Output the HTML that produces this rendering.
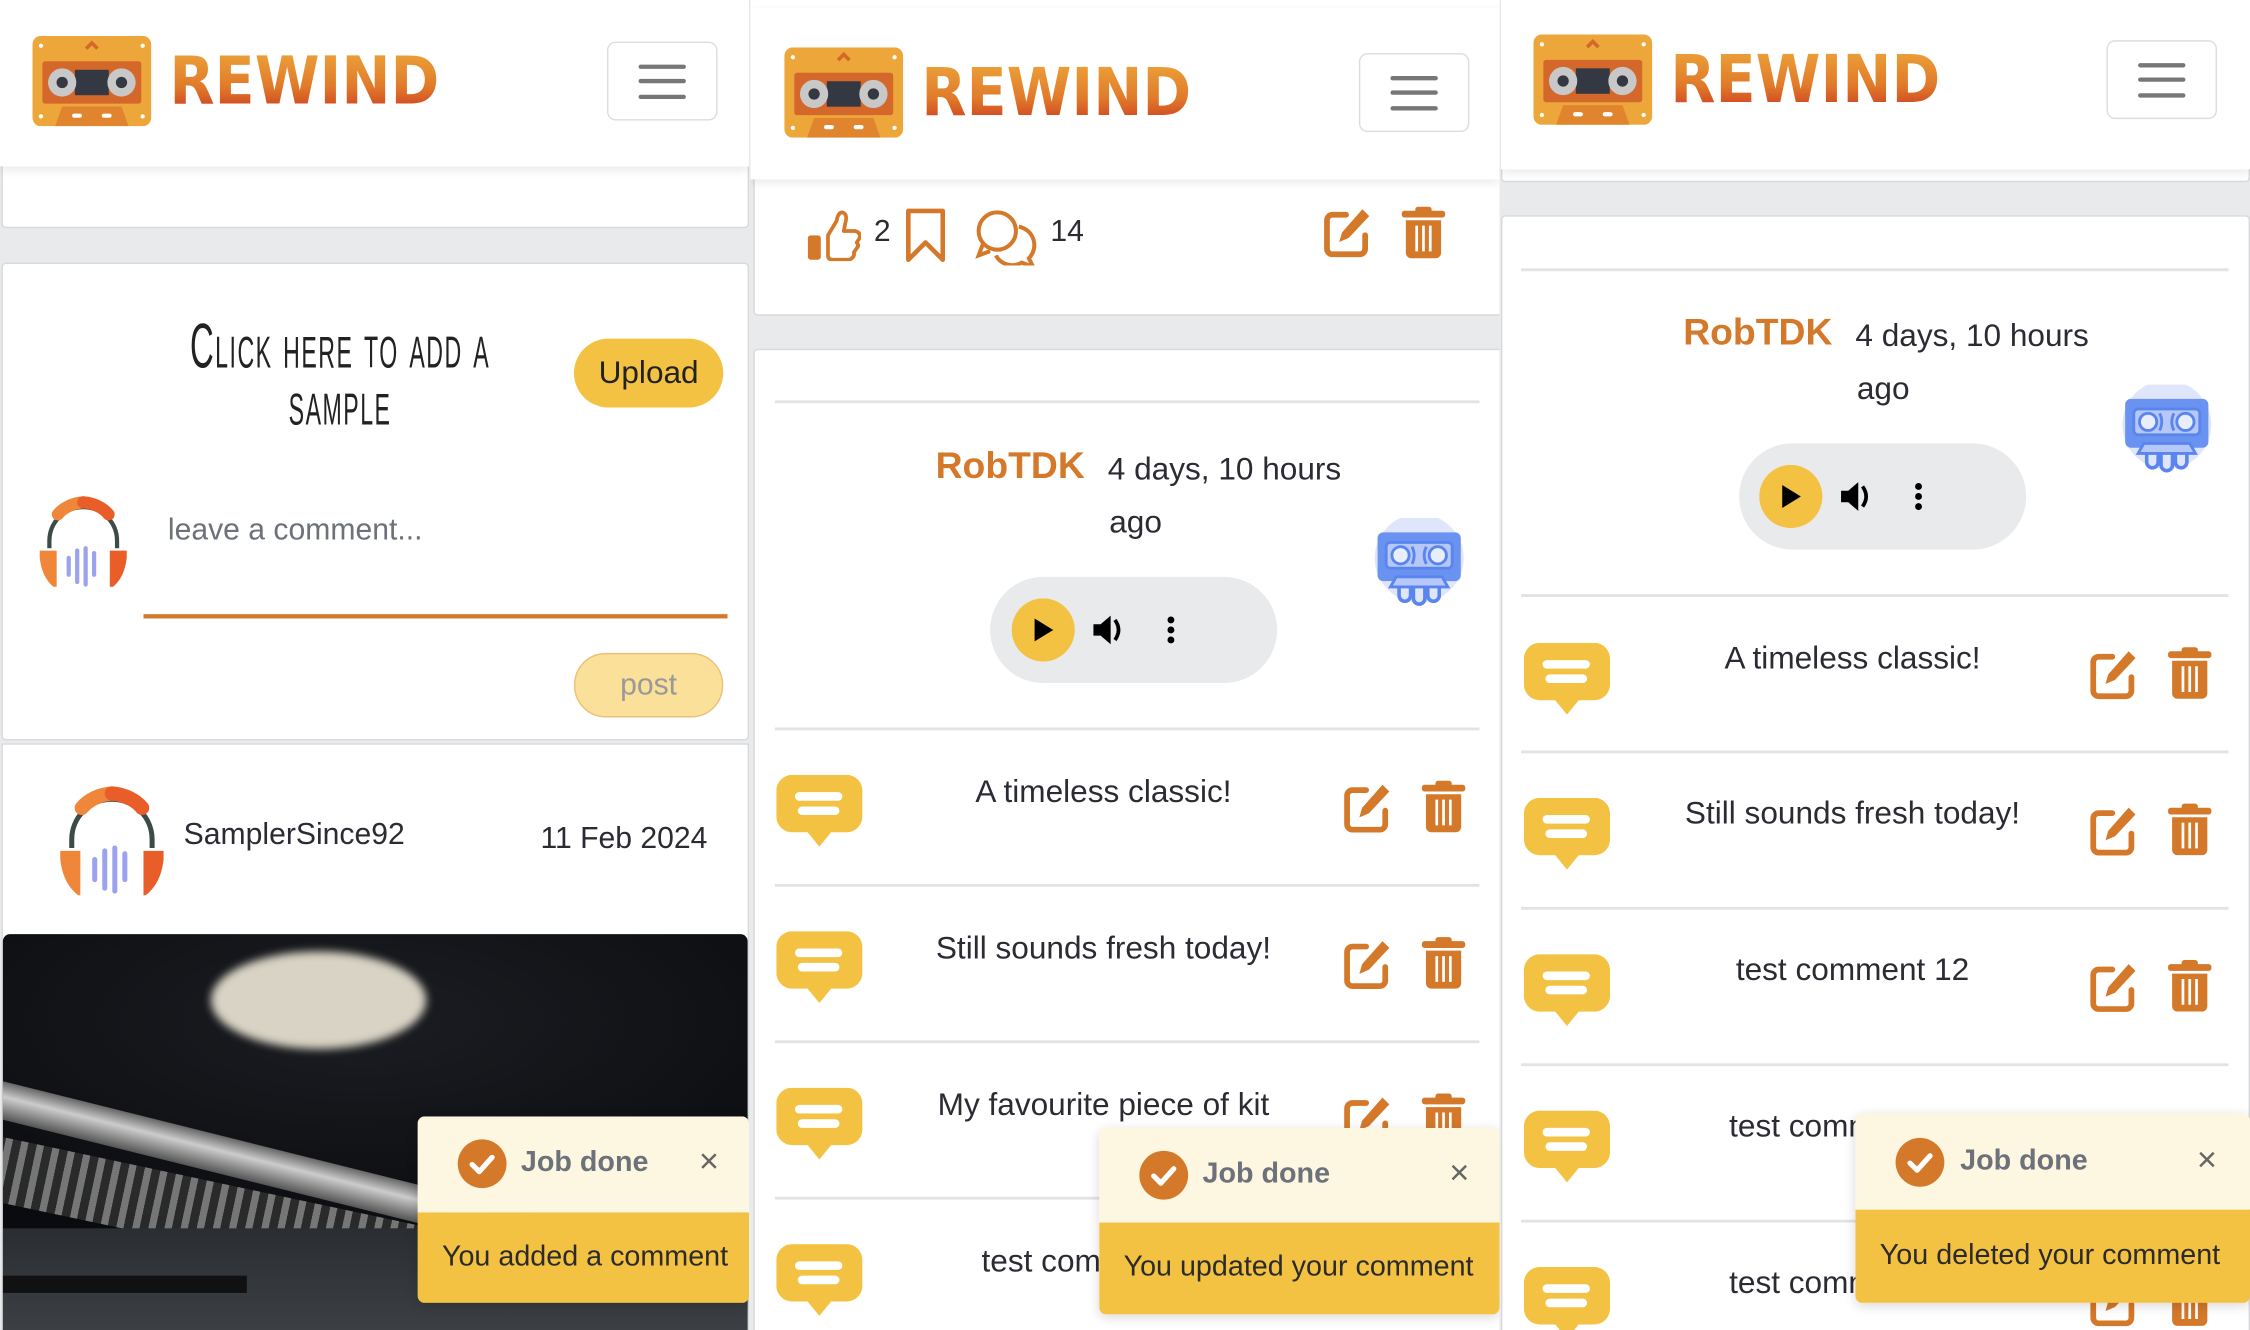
<!DOCTYPE html>
<html><head><meta charset="utf-8">
<style>
html,body{margin:0;padding:0;background:#fff;overflow:hidden}
body{width:2250px;height:1330px;position:relative}
#w{position:absolute;left:0;top:0;width:1568px;height:927px;transform:scale(1.43495);transform-origin:0 0;font-family:"Liberation Sans",sans-serif;color:#2b2b33;background:#e9eaec}
.a{position:absolute}
.pnl{position:absolute;top:0;height:927px;overflow:hidden;background:#e9eaec}
.hdr{position:absolute;left:0;right:0;background:#fff;box-shadow:0 3px 6px rgba(0,0,0,.08);z-index:2}
.rw{position:absolute;font-family:"DejaVu Sans","Liberation Sans",sans-serif;font-weight:bold;font-size:46px;letter-spacing:0;line-height:46px;background:linear-gradient(#eda63a,#e07a2a 60%,#cc3a20);-webkit-background-clip:text;background-clip:text;color:transparent;transform:scaleX(0.89);transform-origin:0 0}
.hb{position:absolute;width:75px;height:53px;border:1px solid #ddd;border-radius:6px;background:#fff}
.hb i{position:absolute;left:21px;width:33px;height:3px;background:#777;border-radius:2px}
.card{position:absolute;background:#fff;border:1px solid #d8d9dc;border-radius:3px}
.ln{position:absolute;height:2px;background:#e3e3e3}
.t{position:absolute;white-space:nowrap}
.toast{position:absolute;border-radius:5px;overflow:hidden;box-shadow:0 2px 8px rgba(0,0,0,.15);z-index:5}
.toast .h{position:absolute;left:0;right:0;top:0;background:#fdf6e0}
.toast .b{position:absolute;left:0;right:0;bottom:0;background:#f4c242}
.pill{position:absolute;width:200px;height:74px;border-radius:37px;background:#e9eaec}
.cl{position:absolute;left:0;width:474px;text-align:center;font-variant:small-caps;font-size:44px;line-height:40px;letter-spacing:2px;color:#222;transform:scaleX(0.52);transform-origin:237px 0;white-space:nowrap}
</style></head><body>
<svg width="0" height="0" style="position:absolute">
<defs>
<linearGradient id="wg" x1="0" y1="0" x2="0" y2="1"><stop offset="0" stop-color="#e8452a"/><stop offset="1" stop-color="#f3b440"/></linearGradient>
<symbol id="wave" viewBox="0 0 48 56"><g stroke="url(#wg)" stroke-width="4.5" stroke-linecap="round"><line x1="3" y1="22" x2="3" y2="40"/><line x1="13" y1="4" x2="13" y2="52"/><line x1="23" y1="14" x2="23" y2="46"/><line x1="33" y1="20" x2="33" y2="40"/><line x1="43" y1="10" x2="43" y2="46"/></g></symbol>
<symbol id="edit" viewBox="0 0 40 40"><path d="M19 7H9a4 4 0 0 0-4 4v21a4 4 0 0 0 4 4h20a4 4 0 0 0 4-4V22" fill="none" stroke="#d4782a" stroke-width="4.2" stroke-linecap="round"/><path d="M31 3l5 5-15 16-7 3 2-7z" fill="#d4782a"/></symbol>
<symbol id="trash" viewBox="0 0 36 40"><rect x="2" y="4" width="32" height="5" rx="2" fill="#d4782a"/><rect x="12" y="1" width="12" height="5" rx="2" fill="#d4782a"/><path d="M5 11h26v24a4 4 0 0 1-4 4H9a4 4 0 0 1-4-4z" fill="#d4782a"/><g stroke="#fff" stroke-width="2"><line x1="13" y1="15" x2="13" y2="34"/><line x1="18" y1="15" x2="18" y2="34"/><line x1="23" y1="15" x2="23" y2="34"/></g></symbol>
<symbol id="bub" viewBox="0 0 60 56"><rect x="0" y="0" width="60" height="40" rx="11" fill="#f4c242"/><path d="M21 39h18l-9 11z" fill="#f4c242"/><rect x="13" y="12" width="33" height="6" rx="3" fill="#fff"/><rect x="15" y="22" width="29" height="6" rx="3" fill="#fff"/></symbol>
<symbol id="cass" viewBox="0 0 84 64"><rect x="0" y="0" width="84" height="64" rx="6" fill="#eda63a"/><rect x="7" y="18" width="70" height="30" rx="2" fill="#d4672a"/><rect x="30" y="24" width="24" height="18" fill="#333842"/><circle cx="21" cy="33" r="10" fill="#c8c8c8"/><circle cx="63" cy="33" r="10" fill="#c8c8c8"/><circle cx="21" cy="33" r="4" fill="#333842"/><circle cx="63" cy="33" r="4" fill="#333842"/><path d="M38 9l4-4 4 4" stroke="#d4672a" stroke-width="2.5" fill="none"/><path d="M16 64l5-14h42l5 14z" fill="#e0852e"/><rect x="28" y="55" width="7" height="3" rx="1.5" fill="#fff"/><rect x="49" y="55" width="7" height="3" rx="1.5" fill="#fff"/><g fill="#fff"><circle cx="6" cy="7" r="1.5"/><circle cx="78" cy="7" r="1.5"/><circle cx="6" cy="57" r="1.5"/><circle cx="78" cy="57" r="1.5"/></g></symbol>
<symbol id="head" viewBox="0 0 76 76"><path d="M10 44V38a28 28 0 0 1 56 0v6" fill="none" stroke="#3c4a48" stroke-width="3.5"/><path d="M17 16a28 22 0 0 1 21-10" fill="none" stroke="#f0863a" stroke-width="10" stroke-linecap="round"/><path d="M38 6a28 22 0 0 1 21 10" fill="none" stroke="#e85d28" stroke-width="10" stroke-linecap="round"/><path d="M2 46h14v32q-12-8-14-26z" fill="#f0863a"/><path d="M74 46H60v32q12-8 14-26z" fill="#e85d28"/><g stroke="#9ca3ee" stroke-width="3.5" stroke-linecap="round"><line x1="26" y1="52" x2="26" y2="66"/><line x1="33" y1="46" x2="33" y2="72"/><line x1="40" y1="44" x2="40" y2="74"/><line x1="47" y1="48" x2="47" y2="66"/></g></symbol>
<symbol id="blue" viewBox="0 0 64 64"><circle cx="32" cy="28" r="31" fill="#dfe6fb"/><rect x="3" y="10" width="58" height="34" rx="4" fill="#6a92f0"/><rect x="9" y="17" width="46" height="18" rx="3" fill="#b5c8f7" stroke="#5b85ee" stroke-width="2"/><circle cx="19" cy="26" r="6" fill="#e8eefc" stroke="#5b85ee" stroke-width="2"/><circle cx="45" cy="26" r="6" fill="#e8eefc" stroke="#5b85ee" stroke-width="2"/><path d="M27 20q3 6 0 12M37 20q-3 6 0 12" stroke="#5b85ee" stroke-width="2" fill="none"/><path d="M12 48l4-7h32l4 7z" fill="#b5c8f7" stroke="#5b85ee" stroke-width="2"/><path d="M18 48v6a4 4 0 0 0 8 0v-6M28 48v8a4 4 0 0 0 8 0v-8M38 48v6a4 4 0 0 0 8 0v-6" stroke="#5b85ee" stroke-width="2.5" fill="none"/></symbol>
<symbol id="chk" viewBox="0 0 36 36"><circle cx="18" cy="18" r="17" fill="#d4782a"/><path d="M11 18.5l5 5 9-10" stroke="#fff" stroke-width="3.6" fill="none" stroke-linecap="round" stroke-linejoin="round"/></symbol>
<symbol id="play" viewBox="0 0 160 44"><circle cx="22" cy="22" r="22" fill="#f4c242"/><path d="M16 14v16l13-8z" fill="#000"/><path d="M57 18h5l7-6v20l-7-6h-5z" fill="#000"/><path d="M72 15q5 7 0 14" stroke="#000" stroke-width="2.6" fill="none"/><circle cx="111" cy="15" r="2.4" fill="#000"/><circle cx="111" cy="22" r="2.4" fill="#000"/><circle cx="111" cy="29" r="2.4" fill="#000"/></symbol>
</defs></svg>

<div id="w">
<!-- PANEL 1 -->
<div class="pnl" style="left:0;width:522px">
 <div class="hdr" style="top:0;height:116px">
  <svg class="a" style="left:22px;top:25px" width="84" height="63"><use href="#cass"/></svg>
  <div class="rw" style="left:118px;top:33px">REWIND</div>
  <div class="hb" style="left:423px;top:29px"><i style="top:15px"></i><i style="top:25px"></i><i style="top:36px"></i></div>
 </div>
 <div class="card" style="left:1px;top:100px;width:519px;height:57px"></div>
 <div class="card" style="left:1px;top:183px;width:519px;height:331px"></div>
 <svg class="a" style="left:34px;top:232px" width="48" height="56"><use href="#wave"/></svg>
 <div class="cl" style="top:222px">Click here to add a</div>
 <div class="cl" style="top:262px">sample</div>
 <div class="a" style="left:400px;top:236px;width:104px;height:48px;border-radius:24px;background:#f4c242;font-size:22px;line-height:48px;text-align:center;color:#222">Upload</div>
 <svg class="a" style="left:26px;top:345px" width="64" height="64"><use href="#head"/></svg>
 <div class="t" style="left:117px;top:358px;font-size:21px;color:#6c717a">leave a comment...</div>
 <div class="a" style="left:100px;top:428px;width:407px;height:3px;background:#d4782a"></div>
 <div class="a" style="left:400px;top:455px;width:102px;height:43px;border-radius:22px;background:#fbe09a;border:1px solid #ecc07a;font-size:21px;line-height:43px;text-align:center;color:#999">post</div>
 <div class="card" style="left:1px;top:518px;width:519px;height:420px;border-radius:0"></div>
 <svg class="a" style="left:40px;top:546px" width="76" height="78"><use href="#head"/></svg>
 <div class="t" style="left:128px;top:570px;font-size:21px">SamplerSince92</div>
 <div class="t" style="right:29px;top:573px;font-size:21px">11 Feb 2024</div>
 <div class="a" style="left:2px;top:651px;width:519px;height:276px;border-radius:5px 5px 0 0;overflow:hidden;background:radial-gradient(ellipse 400px 160px at 250px 60px,#1b1d22 0,#0a0b0e 100%)">
  <div class="a" style="left:145px;top:12px;width:150px;height:68px;border-radius:50%;background:#d8d3c4;filter:blur(3px)"></div>
  <div class="a" style="left:-30px;top:95px;width:600px;height:26px;transform:rotate(14deg);transform-origin:0 0;background:linear-gradient(#666,#ccc 40%,#555);border-radius:13px"></div>
  <div class="a" style="left:-30px;top:135px;width:330px;height:45px;transform:rotate(12deg);transform-origin:0 0;background:repeating-linear-gradient(90deg,#999 0 5px,#333 5px 11px);opacity:.75"></div>
  <div class="a" style="left:0;top:205px;width:519px;height:75px;background:linear-gradient(#2a2d31,#3d4145)"></div>
  <div class="a" style="left:0;top:238px;width:170px;height:12px;background:#111"></div>
 </div>
 <div class="toast" style="left:291px;top:778px;width:231px;height:130px">
  <div class="h" style="height:67px">
   <svg class="a" style="left:27px;top:15px" width="36" height="36"><use href="#chk"/></svg>
   <div class="t" style="left:72px;top:21px;font-size:20px;font-weight:bold;color:#6c717a">Job done</div>
   <div class="t" style="left:196px;top:18px;font-size:24px;color:#666">×</div>
  </div>
  <div class="b" style="height:63px"><div class="t" style="left:17px;top:20px;font-size:20px;color:#2b2b2b">You added a comment</div></div>
 </div>
</div>

<!-- PANEL 2 -->
<div class="pnl" style="left:523px;width:522px;background:#e9eaec">
 <div class="a" style="left:0;top:0;width:522px;height:5px;background:#fff"></div>
 <div class="hdr" style="top:5px;height:120px">
  <svg class="a" style="left:23px;top:28px" width="84" height="63"><use href="#cass"/></svg>
  <div class="rw" style="left:119px;top:36px">REWIND</div>
  <div class="hb" style="left:424px;top:32px"><i style="top:15px"></i><i style="top:25px"></i><i style="top:36px"></i></div>
 </div>
 <div class="card" style="left:2px;top:110px;width:520px;height:108px"></div>
 <svg class="a" style="left:39px;top:146px" width="38" height="36" viewBox="0 0 38 36"><rect x="1" y="18" width="9" height="17" rx="2" fill="#d4782a"/><path d="M15 18l6-10q1-6 4-6 4 1 2 8l-1 5h8q4 1 3 5l-2 3q2 2 0 4l-2 3q1 3-3 5H18q-3 0-3-3z" fill="none" stroke="#d4782a" stroke-width="2.6" stroke-linejoin="round"/></svg>
 <div class="t" style="left:86px;top:150px;font-size:21px">2</div>
 <svg class="a" style="left:108px;top:145px" width="28" height="38" viewBox="0 0 28 38"><path d="M2 2h24v34l-12-12-12 12z" fill="none" stroke="#d4782a" stroke-width="3.2" stroke-linejoin="round"/></svg>
 <svg class="a" style="left:153px;top:145px" width="48" height="40" viewBox="0 0 48 40"><circle cx="19" cy="16" r="13" fill="none" stroke="#d4782a" stroke-width="2.8"/><path d="M9 25l-3 8 8-3" fill="none" stroke="#d4782a" stroke-width="2.8"/><path d="M34 13a13 13 0 0 1 7 22l3 6-8-3a13 13 0 0 1-18-5" fill="none" stroke="#d4782a" stroke-width="2.8"/></svg>
 <div class="t" style="left:209px;top:150px;font-size:21px">14</div>
 <svg class="a" style="left:397px;top:143px" width="38" height="38"><use href="#edit"/></svg>
 <svg class="a" style="left:452px;top:143px" width="34" height="38"><use href="#trash"/></svg>
 <div class="card" style="left:2px;top:243px;width:520px;height:700px"></div>
 <div class="ln" style="left:17px;top:279px;width:491px"></div>
 <div class="t" style="left:129px;top:309px;font-size:26px;font-weight:bold;color:#d4782a">RobTDK</div>
 <div class="t" style="left:249px;top:314px;font-size:22px">4 days, 10 hours</div>
 <div class="t" style="left:250px;top:351px;font-size:22px">ago</div>
 <svg class="a" style="left:34px;top:368px" width="50" height="54"><use href="#wave"/></svg>
 <svg class="a" style="left:434px;top:361px" width="64" height="64"><use href="#blue"/></svg>
 <div class="pill" style="left:167px;top:402px"></div>
 <svg class="a" style="left:182px;top:417px" width="160" height="44"><use href="#play"/></svg>
 <div class="ln" style="left:17px;top:507px;width:491px"></div>
 <div class="ln" style="left:17px;top:616px;width:491px"></div>
 <div class="ln" style="left:17px;top:725px;width:491px"></div>
 <div class="ln" style="left:17px;top:834px;width:491px"></div>
 <svg class="a" style="left:18px;top:540px" width="60" height="56"><use href="#bub"/></svg>
 <svg class="a" style="left:18px;top:649px" width="60" height="56"><use href="#bub"/></svg>
 <svg class="a" style="left:18px;top:758px" width="60" height="56"><use href="#bub"/></svg>
 <svg class="a" style="left:18px;top:867px" width="60" height="56"><use href="#bub"/></svg>
 <div class="t" style="left:90px;width:312px;text-align:center;top:539px;font-size:22px">A timeless classic!</div>
 <div class="t" style="left:90px;width:312px;text-align:center;top:648px;font-size:22px">Still sounds fresh today!</div>
 <div class="t" style="left:90px;width:312px;text-align:center;top:757px;font-size:22px">My favourite piece of kit</div>
 <div class="t" style="left:161px;top:866px;font-size:22px">test comment</div>
 <svg class="a" style="left:411px;top:544px" width="38" height="38"><use href="#edit"/></svg>
 <svg class="a" style="left:466px;top:543px" width="34" height="38"><use href="#trash"/></svg>
 <svg class="a" style="left:411px;top:653px" width="38" height="38"><use href="#edit"/></svg>
 <svg class="a" style="left:466px;top:652px" width="34" height="38"><use href="#trash"/></svg>
 <svg class="a" style="left:411px;top:762px" width="38" height="38"><use href="#edit"/></svg>
 <svg class="a" style="left:466px;top:761px" width="34" height="38"><use href="#trash"/></svg>
 <div class="toast" style="left:243px;top:786px;width:279px;height:130px">
  <div class="h" style="height:66px">
   <svg class="a" style="left:27px;top:15px" width="36" height="36"><use href="#chk"/></svg>
   <div class="t" style="left:72px;top:21px;font-size:20px;font-weight:bold;color:#6c717a">Job done</div>
   <div class="t" style="left:244px;top:18px;font-size:24px;color:#666">×</div>
  </div>
  <div class="b" style="height:64px"><div class="t" style="left:17px;top:20px;font-size:20px;color:#2b2b2b">You updated your comment</div></div>
 </div>
</div>

<!-- PANEL 3 -->
<div class="pnl" style="left:1046px;width:522px">
 <div class="hdr" style="top:0;height:118px">
  <svg class="a" style="left:22px;top:24px" width="84" height="63"><use href="#cass"/></svg>
  <div class="rw" style="left:118px;top:32px">REWIND</div>
  <div class="hb" style="left:422px;top:28px"><i style="top:15px"></i><i style="top:25px"></i><i style="top:36px"></i></div>
 </div>
 <div class="card" style="left:0;top:100px;width:520px;height:25px"></div>
 <div class="card" style="left:0;top:150px;width:520px;height:800px"></div>
 <div class="ln" style="left:14px;top:187px;width:493px"></div>
 <div class="t" style="left:127px;top:216px;font-size:26px;font-weight:bold;color:#d4782a">RobTDK</div>
 <div class="t" style="left:247px;top:221px;font-size:22px">4 days, 10 hours</div>
 <div class="t" style="left:248px;top:258px;font-size:22px">ago</div>
 <svg class="a" style="left:33px;top:275px" width="50" height="54"><use href="#wave"/></svg>
 <svg class="a" style="left:432px;top:268px" width="64" height="64"><use href="#blue"/></svg>
 <div class="pill" style="left:166px;top:309px"></div>
 <svg class="a" style="left:180px;top:324px" width="160" height="44"><use href="#play"/></svg>
 <div class="ln" style="left:14px;top:414px;width:493px"></div>
 <div class="ln" style="left:14px;top:523px;width:493px"></div>
 <div class="ln" style="left:14px;top:632px;width:493px"></div>
 <div class="ln" style="left:14px;top:741px;width:493px"></div>
 <div class="ln" style="left:14px;top:850px;width:493px"></div>
 <svg class="a" style="left:16px;top:448px" width="60" height="56"><use href="#bub"/></svg>
 <svg class="a" style="left:16px;top:556px" width="60" height="56"><use href="#bub"/></svg>
 <svg class="a" style="left:16px;top:665px" width="60" height="56"><use href="#bub"/></svg>
 <svg class="a" style="left:16px;top:774px" width="60" height="56"><use href="#bub"/></svg>
 <svg class="a" style="left:16px;top:883px" width="60" height="56"><use href="#bub"/></svg>
 <div class="t" style="left:90px;width:310px;text-align:center;top:446px;font-size:22px">A timeless classic!</div>
 <div class="t" style="left:90px;width:310px;text-align:center;top:554px;font-size:22px">Still sounds fresh today!</div>
 <div class="t" style="left:90px;width:310px;text-align:center;top:663px;font-size:22px">test comment 12</div>
 <div class="t" style="left:159px;top:772px;font-size:22px">test comment</div>
 <div class="t" style="left:159px;top:881px;font-size:22px">test comment</div>
 <svg class="a" style="left:408px;top:451px" width="38" height="38"><use href="#edit"/></svg>
 <svg class="a" style="left:463px;top:450px" width="34" height="38"><use href="#trash"/></svg>
 <svg class="a" style="left:408px;top:560px" width="38" height="38"><use href="#edit"/></svg>
 <svg class="a" style="left:463px;top:559px" width="34" height="38"><use href="#trash"/></svg>
 <svg class="a" style="left:408px;top:669px" width="38" height="38"><use href="#edit"/></svg>
 <svg class="a" style="left:463px;top:668px" width="34" height="38"><use href="#trash"/></svg>
 <svg class="a" style="left:408px;top:888px" width="38" height="38"><use href="#edit"/></svg>
 <svg class="a" style="left:463px;top:887px" width="34" height="38"><use href="#trash"/></svg>
 <div class="toast" style="left:247px;top:776px;width:275px;height:132px">
  <div class="h" style="height:67px">
   <svg class="a" style="left:27px;top:16px" width="36" height="36"><use href="#chk"/></svg>
   <div class="t" style="left:73px;top:22px;font-size:20px;font-weight:bold;color:#6c717a">Job done</div>
   <div class="t" style="left:238px;top:19px;font-size:24px;color:#666">×</div>
  </div>
  <div class="b" style="height:65px"><div class="t" style="left:17px;top:21px;font-size:20px;color:#2b2b2b">You deleted your comment</div></div>
 </div>
</div>
</div>
</body></html>
